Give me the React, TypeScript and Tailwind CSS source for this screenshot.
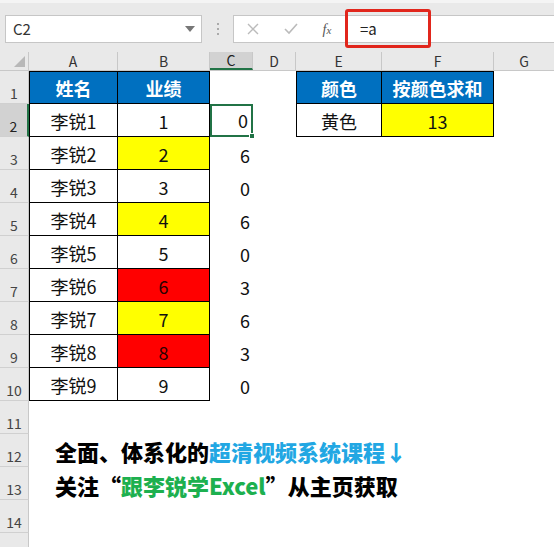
import React from "react";

const FONT = '"Noto Sans CJK SC", "Noto Sans", sans-serif';

type Cell = { t?: string; bg?: string; color?: string; bold?: boolean; table?: boolean; align?: "c" | "r" };

const widths = [89, 92, 43, 43, 86, 112];

function buildRows(): Cell[][] {
  const rows: Cell[][] = [];
  const bfill: Record<number, string> = { 2: "bg-[#ffff00]", 4: "bg-[#ffff00]", 6: "bg-[#ff0000]", 7: "bg-[#ffff00]", 8: "bg-[#ff0000]" };
  const cvals = ["", "0", "6", "0", "6", "0", "3", "6", "3", "0"];
  for (let r = 1; r <= 10; r++) {
    const row: Cell[] = [];
    if (r === 1) {
      row.push({ t: "姓名", bg: "bg-[#0070c0]", color: "text-white", bold: true, table: true, align: "c" });
      row.push({ t: "业绩", bg: "bg-[#0070c0]", color: "text-white", bold: true, table: true, align: "c" });
    } else {
      row.push({ t: `李锐${r - 1}`, table: true, align: "c" });
      row.push({ t: `${r - 1}`, bg: bfill[r - 1], table: true, align: "c", color: bfill[r - 1] === "bg-[#ff0000]" ? "text-[#2a0000]" : "text-[#111]" });
    }
    row.push({ t: cvals[r - 1], align: "r" });
    row.push({});
    if (r === 1) {
      row.push({ t: "颜色", bg: "bg-[#0070c0]", color: "text-white", bold: true, table: true, align: "c" });
      row.push({ t: "按颜色求和", bg: "bg-[#0070c0]", color: "text-white", bold: true, table: true, align: "c" });
    } else if (r === 2) {
      row.push({ t: "黄色", table: true, align: "c" });
      row.push({ t: "13", bg: "bg-[#ffff00]", table: true, align: "c" });
    } else {
      row.push({});
      row.push({});
    }
    rows.push(row);
  }
  return rows;
}

function RowHeader({ n, active }: { n?: number; active?: boolean }) {
  return (
    <div
      className={
        "w-[29px] shrink-0 h-full flex items-end justify-center pb-[3px] text-[14px] leading-none border-b border-[#d0d0d0] " +
        (active ? "bg-[#d2d2d2] border-r-2 border-r-[#217346] text-[#222]" : "bg-[#e9e9e9] border-r border-r-[#c8c8c8] text-[#444]")
      }
    >
      {n}
    </div>
  );
}

export default function App() {
  const rows = buildRows();
  return (
    <div className="w-[554px] h-[547px] overflow-hidden bg-white relative" style={{ fontFamily: FONT }}>
      {/* toolbar */}
      <div className="h-[52px] bg-[#e9e9e9] flex items-start pt-[15px] pl-[5px] border-t-[3px] border-[#f4f4f4]">
        <div className="w-[197px] h-[28px] -mt-[3px] bg-white border border-[#c6c6c6] flex items-center justify-between pl-[7px] pr-[6px]">
          <span className="text-[15px] text-[#333]">C2</span>
          <svg width="10" height="6" viewBox="0 0 10 6"><path d="M0 0 L10 0 L5 6 Z" fill="#777" /></svg>
        </div>
        <div className="w-[31px] h-[28px] -mt-[3px] flex flex-col items-center justify-center gap-[3px]">
          <div className="w-[2px] h-[2px] bg-[#aaa]" />
          <div className="w-[2px] h-[2px] bg-[#aaa]" />
          <div className="w-[2px] h-[2px] bg-[#aaa]" />
        </div>
        <div className="flex-1 h-[28px] -mt-[3px] bg-white border border-[#c6c6c6] border-r-0 flex items-center">
          <div className="w-[38px] flex justify-center">
            <svg width="12" height="12" viewBox="0 0 12 12"><path d="M1 1 L11 11 M11 1 L1 11" stroke="#bbb" strokeWidth="1.4" /></svg>
          </div>
          <div className="w-[38px] flex justify-center">
            <svg width="14" height="12" viewBox="0 0 14 12"><path d="M1 6 L5 10 L13 1" stroke="#bbb" strokeWidth="1.6" fill="none" /></svg>
          </div>
          <div className="w-[34px] flex justify-center">
            <span className="text-[14px] text-[#555] italic" style={{ fontFamily: '"Liberation Serif", serif' }}>f<span className="text-[11px]">x</span></span>
          </div>
          <span className="ml-[16px] text-[15px] text-[#222]">=a</span>
        </div>
      </div>
      {/* red annotation box */}
      <div className="absolute left-[345px] top-[9px] w-[86px] h-[39px] border-[3px] border-[#e1261c] rounded-[3px]" />

      {/* column header */}
      <div className="h-[19px] flex bg-[#e9e9e9] border-b border-[#c8c8c8]">
        <div className="w-[29px] shrink-0 relative border-r border-[#c8c8c8]">
          <svg className="absolute right-[3px] bottom-[3px]" width="11" height="11" viewBox="0 0 11 11"><path d="M11 0 L11 11 L0 11 Z" fill="#b8b8b8" /></svg>
        </div>
        {["A", "B", "C", "D", "E", "F"].map((l, i) => (
          <div
            key={l}
            style={{ width: widths[i] }}
            className={
              "shrink-0 flex items-center justify-center text-[14px] leading-none border-r border-[#c8c8c8] " +
              (l === "C" ? "bg-[#d2d2d2] border-b-2 border-b-[#217346] text-[#222]" : "text-[#333]")
            }
          >
            {l}
          </div>
        ))}
        <div className="flex-1 flex items-center justify-center text-[14px] leading-none text-[#333]">G</div>
      </div>

      {/* data rows */}
      {rows.map((row, ri) => (
        <div key={ri} className="h-[33px] flex">
          <RowHeader n={ri + 1} active={ri === 1} />
          {row.map((c, ci) => {
            const firstInTable = ci === 0 || ci === 4;
            const isSel = ri === 1 && ci === 2;
            let cls = "shrink-0 h-full flex items-end pb-[3px] text-[18px] leading-[24px] relative ";
            if (c.table) {
              cls += "border-r border-b border-black ";
              if (firstInTable) cls += "border-l ";
              if (ri === 0) cls += "border-t ";
            }
            if (c.bg) cls += c.bg + " ";
            cls += (c.color || "text-[#111]") + " ";
            if (c.bold) cls += "font-bold ";
            cls += c.align === "r" ? "justify-end pr-[3px] " : "justify-center ";
            if (isSel) cls += "border-2 border-[#217346] pr-[2px] ";
            return (
              <div key={ci} style={{ width: widths[ci] }} className={cls}>
                {c.t}
                {isSel && <div className="absolute -right-[4px] -bottom-[4px] w-[6px] h-[6px] bg-[#217346] border border-white" />}
              </div>
            );
          })}
        </div>
      ))}

      {/* rows 11-15 */}
      <div className="h-[33px] flex">
        <RowHeader n={11} />
      </div>
      <div className="h-[33px] flex">
        <RowHeader n={12} />
        <div className="flex items-end pb-[2px] pl-[26px] whitespace-nowrap text-[22px] leading-[28px] font-black text-black">
          全面、体系化的<span className="text-[#22a7e3]">超清视频系统课程↓</span>
        </div>
      </div>
      <div className="h-[33px] flex">
        <RowHeader n={13} />
        <div className="flex items-end pb-[1px] pl-[26px] whitespace-nowrap text-[22px] leading-[28px] font-black text-black">
          关注“<span className="text-[#1db04f]">跟李锐学Excel</span>”从主页获取
        </div>
      </div>
      <div className="h-[33px] flex">
        <RowHeader n={14} />
      </div>
      <div className="h-[33px] flex">
        <RowHeader />
      </div>
    </div>
  );
}
